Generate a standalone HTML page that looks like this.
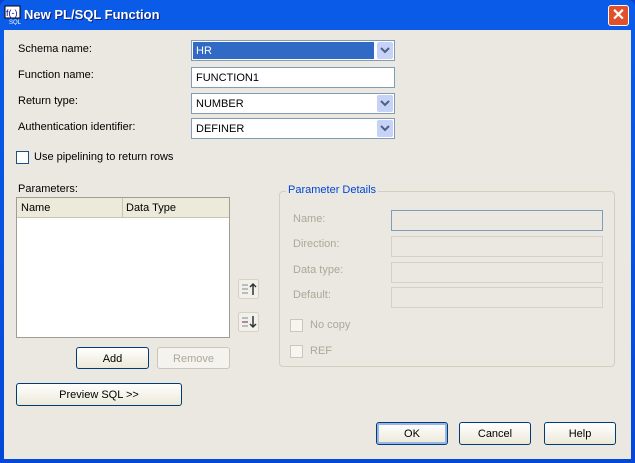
<!DOCTYPE html>
<html><head><meta charset="utf-8"><style>
*{margin:0;padding:0;box-sizing:border-box}
body{width:635px;height:463px;overflow:hidden;font-family:"Liberation Sans",sans-serif;font-size:11px;color:#000;background:#0a3fd0}
#win{position:absolute;left:0;top:0;width:635px;height:463px;background:linear-gradient(#0a5ce8,#0548d8);border-radius:7px 7px 0 0}
#title{position:absolute;left:24px;top:7px;color:#fff;font-weight:bold;font-size:13px;text-shadow:1px 1px #0a1e80}
#body{position:absolute;left:4px;top:30px;width:627px;height:429px;background:#eae8e0}
.a{position:absolute;white-space:nowrap}
.in{position:absolute;background:#fff;border:1px solid #7f9db9;padding:4px 0 0 4px;font-size:11px}
.dd{position:absolute;right:1px;top:1px;width:16px;height:17px;background:#c6d3f7;border-radius:2px}
.dd svg{position:absolute;left:3px;top:5px}
.btn{position:absolute;border:1px solid #003c74;border-radius:3px;background:linear-gradient(#fff,#ece9d8);text-align:center;font-size:11px}
.dis{color:#aca899}
.dbox{position:absolute;border:1px solid #d8d0c8;background:#eae8e0}
.cb{position:absolute;width:13px;height:13px;border:1px solid #1c5180;background:#fff}
</style></head><body>
<div id="win">
<svg class="a" style="left:4px;top:5px" width="18" height="20"><rect x="1" y="1" width="15" height="12" fill="#fff" stroke="#000"/><text x="2" y="11" font-size="9" font-family="Liberation Sans" fill="#00a">f(-)</text><text x="5" y="19" font-size="6" font-family="Liberation Sans" fill="#fff">SQL</text></svg>
<div id="title">New PL/SQL Function</div>
<div class="a" style="left:608px;top:5px;width:21px;height:21px;border:1px solid #fff;border-radius:3px;background:#e0502a;color:#fff;font-size:16px;font-weight:bold;text-align:center;line-height:19px">✕</div>
<div id="body">
<div class="a" style="left:14px;top:13px">Schema name:</div>
<div class="a" style="left:14px;top:39px">Function name:</div>
<div class="a" style="left:14px;top:65px">Return type:</div>
<div class="a" style="left:14px;top:91px">Authentication identifier:</div>

<div class="in" style="left:187px;top:10px;width:204px;height:21px"><div style="position:absolute;left:1px;top:1px;width:181px;height:17px;background:#316ac5;color:#fff;padding:3px 3px">HR</div><div class="dd"><svg width="10" height="7"><path d="M1 1l4 4 4-4" stroke="#4d6185" stroke-width="2" fill="none"/></svg></div></div>
<div class="in" style="left:187px;top:37px;width:204px;height:21px">FUNCTION1</div>
<div class="in" style="left:187px;top:63px;width:204px;height:21px">NUMBER<div class="dd"><svg width="10" height="7"><path d="M1 1l4 4 4-4" stroke="#4d6185" stroke-width="2" fill="none"/></svg></div></div>
<div class="in" style="left:187px;top:88px;width:204px;height:21px">DEFINER<div class="dd"><svg width="10" height="7"><path d="M1 1l4 4 4-4" stroke="#4d6185" stroke-width="2" fill="none"/></svg></div></div>

<div class="cb" style="left:12px;top:121px"></div>
<div class="a" style="left:30px;top:121px">Use pipelining to return rows</div>

<div class="a" style="left:14px;top:153px">Parameters:</div>
<div class="a" style="left:12px;top:167px;width:214px;height:141px;background:#fff;border:1px solid #a09e94">
 <div style="height:20px;background:#ebeadb;border-bottom:1px solid #c7c5b2;position:relative">
  <span class="a" style="left:4px;top:4px">Name</span>
  <span class="a" style="left:105px;top:0;height:19px;border-left:1px solid #c7c5b2"></span>
  <span class="a" style="left:109px;top:4px">Data Type</span>
 </div>
</div>
<div class="btn" style="left:72px;top:317px;width:73px;height:22px;line-height:22px">Add</div>
<div class="btn dis" style="left:153px;top:317px;width:73px;height:22px;line-height:22px;border-color:#c9c7ba;background:#f4f3ee">Remove</div>

<svg class="a" style="left:234px;top:249px" width="21" height="20"><rect x="0.5" y="0.5" width="20" height="19" rx="2" fill="#f2f0ea" stroke="#d6d2c2"/><path d="M4 6h6M4 10h6M4 14h6" stroke="#888"/><path d="M15 16V5M12 8l3-3 3 3" stroke="#333" stroke-width="1.5" fill="none"/></svg>
<svg class="a" style="left:234px;top:282px" width="21" height="20"><rect x="0.5" y="0.5" width="20" height="19" rx="2" fill="#f2f0ea" stroke="#d6d2c2"/><path d="M4 6h6M4 14h6" stroke="#888"/><path d="M4 10h6" stroke="#a8a" stroke-width="2"/><path d="M15 4v11M12 12l3 3 3-3" stroke="#333" stroke-width="1.5" fill="none"/></svg>

<div class="a" style="left:275px;top:161px;width:336px;height:176px;border:1px solid #d0d0bf;border-radius:4px"></div>
<div class="a" style="left:282px;top:154px;background:#eae8e0;padding:0 2px;color:#0046d5">Parameter Details</div>
<div class="a dis" style="left:289px;top:183px">Name:</div>
<div class="a dis" style="left:289px;top:208px">Direction:</div>
<div class="a dis" style="left:289px;top:234px">Data type:</div>
<div class="a dis" style="left:289px;top:259px">Default:</div>
<div class="a" style="left:387px;top:180px;width:212px;height:21px;border:1px solid #7f9db9"></div>
<div class="dbox" style="left:387px;top:206px;width:212px;height:21px"></div>
<div class="dbox" style="left:387px;top:232px;width:212px;height:21px"></div>
<div class="dbox" style="left:387px;top:257px;width:212px;height:21px"></div>
<div class="a" style="left:286px;top:289px;width:13px;height:13px;border:1px solid #cac8bb;background:#f6f5f0"></div>
<div class="a dis" style="left:306px;top:289px">No copy</div>
<div class="a" style="left:286px;top:315px;width:13px;height:13px;border:1px solid #cac8bb;background:#f6f5f0"></div>
<div class="a dis" style="left:306px;top:315px">REF</div>

<div class="btn" style="left:12px;top:353px;width:166px;height:23px;line-height:23px">Preview SQL &gt;&gt;</div>
<div class="btn" style="left:372px;top:392px;width:72px;height:23px;line-height:23px;box-shadow:inset 0 0 0 2px #9ab4e8">OK</div>
<div class="btn" style="left:455px;top:392px;width:72px;height:23px;line-height:23px">Cancel</div>
<div class="btn" style="left:540px;top:392px;width:72px;height:23px;line-height:23px">Help</div>
</div>
</div>
</body></html>
